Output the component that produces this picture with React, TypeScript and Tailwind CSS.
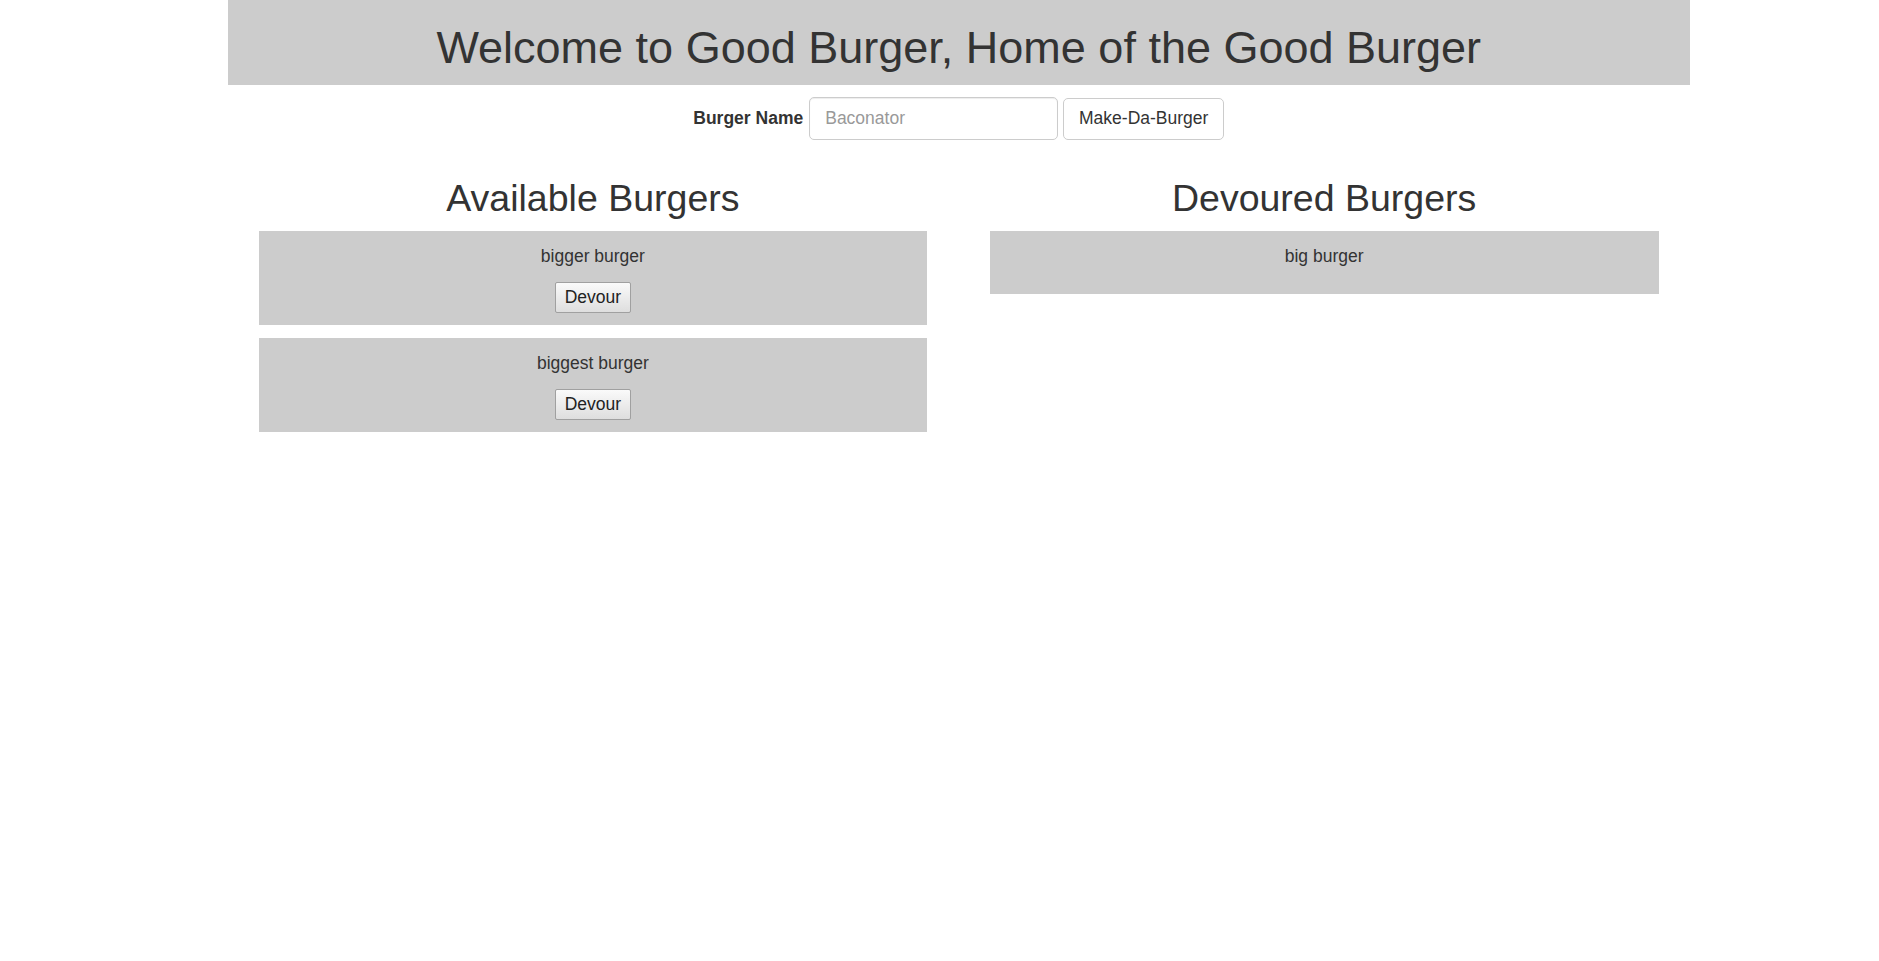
export default function App() {
  const available = ['bigger burger', 'biggest burger'];
  const devoured = ['big burger'];

  return (
    <div className="min-h-screen bg-white font-['Liberation_Sans',Arial,sans-serif] text-[17.5px] leading-[25px] text-[#333]">
      <div className="ml-[227.5px] w-[1462.5px]">
        {/* Header */}
        <div className="h-[85px] bg-[#ccc] pt-[23px] text-center">
          <h1 className="text-[45px] font-normal leading-[49.5px]">
            Welcome to Good Burger, Home of the Good Burger
          </h1>
        </div>

        {/* Form */}
        <form className="mt-[12px] flex items-center justify-center" onSubmit={(e) => e.preventDefault()}>
          <label className="mr-[6px] font-bold">Burger Name</label>
          <input
            type="text"
            placeholder="Baconator"
            className="h-[43px] w-[249px] rounded-[5px] border border-[#ccc] px-[15px] text-[17.5px] text-[#555] shadow-[inset_0_1px_1px_rgba(0,0,0,0.075)] outline-none placeholder:text-[#999]"
          />
          <button
            type="submit"
            className="ml-[5px] h-[42px] w-[161px] rounded-[5px] border border-[#ccc] bg-white text-[17.5px] text-[#333]"
          >
            Make-Da-Burger
          </button>
        </form>

        {/* Columns */}
        <div className="mt-[38px] grid grid-cols-2">
          <div className="pl-[31px] pr-[31.5px]">
            <h2 className="mb-[11.5px] text-center text-[37.5px] leading-[41.25px] font-normal">Available Burgers</h2>
            {available.map((name) => (
              <div key={name} className="mb-[13px] bg-[#ccc] px-[12.5px] pt-[13.5px] pb-[12px] text-center">
                <p className="mb-[12.5px]">{name}</p>
                <button className="h-[31px] rounded-[2px] border border-[#a0a0a0] bg-gradient-to-b from-[#fafafa] to-[#dedede] px-[8.5px] text-[17.5px] leading-[25px] text-[#222]">
                  Devour
                </button>
              </div>
            ))}
          </div>
          <div className="pl-[31px] pr-[31.5px]">
            <h2 className="mb-[11.5px] text-center text-[37.5px] leading-[41.25px] font-normal">Devoured Burgers</h2>
            {devoured.map((name) => (
              <div key={name} className="mb-[13px] bg-[#ccc] px-[12.5px] pt-[13.5px] pb-[12.5px] text-center">
                <p className="mb-[12.5px]">{name}</p>
              </div>
            ))}
          </div>
        </div>
      </div>
    </div>
  );
}
